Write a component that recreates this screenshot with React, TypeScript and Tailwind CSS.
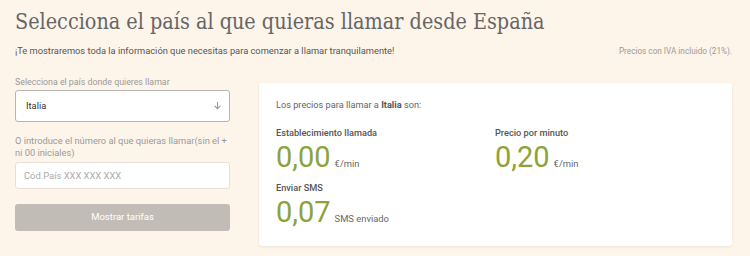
import React from 'react';

const green = 'text-[#8ca33c]';

function Price({ label, value, unit }: { label: string; value: string; unit: string }) {
  return (
    <div>
      <div className="text-[9.2px] font-medium text-[#555] leading-[12px]">{label}</div>
      <div className="flex items-baseline gap-[4px] mt-[5px]">
        <span className={`text-[29px] leading-[26px] ${green}`}>{value}</span>
        <span className="text-[9.4px] text-[#666]">{unit}</span>
      </div>
    </div>
  );
}

export default function App() {
  return (
    <div className="w-[750px] h-[256px] bg-[#fef5ea] overflow-hidden font-['Roboto',sans-serif] px-[15px] pt-[9px]">
      <h1 className="font-['DejaVu_Serif_Condensed','DejaVu_Serif',serif] [font-stretch:condensed] font-light text-[21.4px] leading-[26px] text-[#666]">
        Selecciona el país al que quieras llamar desde España
      </h1>
      <div className="flex items-center justify-between mt-[9px] pr-[3px]">
        <p className="text-[9.3px] text-[#555]">¡Te mostraremos toda la información que necesitas para comenzar a llamar tranquilamente!</p>
        <p className="text-[8.2px] text-[#999]">Precios con IVA incluido (21%).</p>
      </div>
      <div className="flex gap-[29px] mt-[18px]">
        <div className="w-[215px] shrink-0">
          <label className="block text-[8.8px] text-[#999] leading-[12px]">Selecciona el país donde quieres llamar</label>
          <div className="mt-[2px] h-[32px] bg-white border border-[#b5b5b5] rounded-[3px] flex items-center justify-between pl-[10px] pr-[7px]">
            <span className="text-[9.3px] text-[#333]">Italia</span>
            <svg width="9" height="9" viewBox="0 0 10 10" fill="none" stroke="#999" strokeWidth="1.2">
              <path d="M5 1v7.5M1.8 5.5 5 8.5l3.2-3" />
            </svg>
          </div>
          <label className="block text-[9.3px] text-[#999] leading-[12px] mt-[13px]">
            O introduce el número al que quieras llamar(sin el + ni 00 iniciales)
          </label>
          <input
            className="mt-[3px] w-full h-[27px] bg-white border border-[#e6e0d8] rounded-[3px] px-[8px] text-[9.4px] outline-none placeholder:text-[#aaa]"
            placeholder="Cód.País XXX XXX XXX"
          />
          <button className="mt-[15px] w-full h-[27px] bg-[#c1bdb6] rounded-[3px] text-white text-[9.5px]">Mostrar tarifas</button>
        </div>
        <div className="flex-1 mr-[3px] bg-white rounded-[3px] shadow-[0_1px_3px_rgba(0,0,0,0.08)] px-[17px] pt-[15px] h-[163px] mt-[7px]">
          <p className="text-[9.2px] text-[#666]">
            Los precios para llamar a <span className="font-bold text-[#555]">Italia</span> son:
          </p>
          <div className="grid grid-cols-[219px_1fr] mt-[15px] gap-y-[11px]">
            <Price label="Establecimiento llamada" value="0,00" unit="€/min" />
            <Price label="Precio por minuto" value="0,20" unit="€/min" />
            <Price label="Enviar SMS" value="0,07" unit="SMS enviado" />
          </div>
        </div>
      </div>
    </div>
  );
}
